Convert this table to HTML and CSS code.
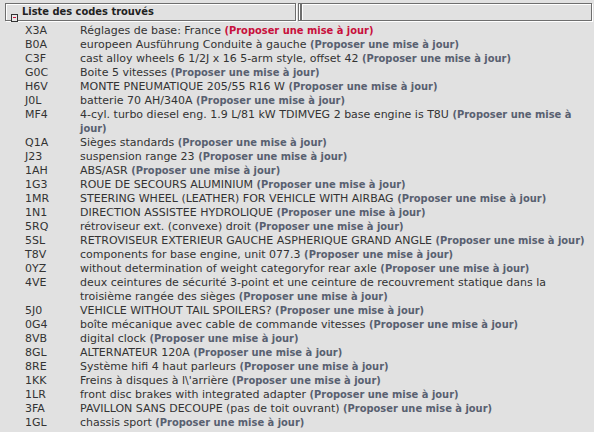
FILE: index.html
```html
<!DOCTYPE html>
<html lang="fr">

<head>
    <meta charset="UTF-8">
    <title>Liste des codes trouvés</title>
    <link rel="stylesheet" href="styles.css">
</head>

<body>
    <!-- En-tête du panneau -->
    <div class="panel-head">
        <div class="head-cell head-title">
            <span class="toggle"></span>
            <span class="title">Liste des codes trouvés</span>
        </div>
        <div class="head-cell head-sep"></div>
        <div class="head-cell head-rest"></div>
    </div>

    <!-- Liste des codes -->
    <table class="codes">
        <tr><td class="code">X3A</td><td>Réglages de base: France <a href="#" class="update red">(Proposer une mise à jour)</a></td></tr>
        <tr><td class="code">B0A</td><td>europeen Ausführung Conduite à gauche <a href="#" class="update">(Proposer une mise à jour)</a></td></tr>
        <tr><td class="code">C3F</td><td>cast alloy wheels 6 1/2J x 16 5-arm style, offset 42 <a href="#" class="update">(Proposer une mise à jour)</a></td></tr>
        <tr><td class="code">G0C</td><td>Boite 5 vitesses <a href="#" class="update">(Proposer une mise à jour)</a></td></tr>
        <tr><td class="code">H6V</td><td>MONTE PNEUMATIQUE 205/55 R16 W <a href="#" class="update">(Proposer une mise à jour)</a></td></tr>
        <tr><td class="code">J0L</td><td>batterie 70 AH/340A <a href="#" class="update">(Proposer une mise à jour)</a></td></tr>
        <tr><td class="code">MF4</td><td>4-cyl. turbo diesel eng. 1.9 L/81 kW TDIMVEG 2 base engine is T8U <a href="#" class="update">(Proposer une mise à jour)</a></td></tr>
        <tr><td class="code">Q1A</td><td>Sièges standards <a href="#" class="update">(Proposer une mise à jour)</a></td></tr>
        <tr><td class="code">J23</td><td>suspension range 23 <a href="#" class="update">(Proposer une mise à jour)</a></td></tr>
        <tr><td class="code">1AH</td><td>ABS/ASR <a href="#" class="update">(Proposer une mise à jour)</a></td></tr>
        <tr><td class="code">1G3</td><td>ROUE DE SECOURS ALUMINIUM <a href="#" class="update">(Proposer une mise à jour)</a></td></tr>
        <tr><td class="code">1MR</td><td>STEERING WHEEL (LEATHER) FOR VEHICLE WITH AIRBAG <a href="#" class="update">(Proposer une mise à jour)</a></td></tr>
        <tr><td class="code">1N1</td><td>DIRECTION ASSISTEE HYDROLIQUE <a href="#" class="update">(Proposer une mise à jour)</a></td></tr>
        <tr><td class="code">5RQ</td><td>rétroviseur ext. (convexe) droit <a href="#" class="update">(Proposer une mise à jour)</a></td></tr>
        <tr><td class="code">5SL</td><td>RETROVISEUR EXTERIEUR GAUCHE ASPHERIQUE GRAND ANGLE <a href="#" class="update">(Proposer une mise à jour)</a></td></tr>
        <tr><td class="code">T8V</td><td>components for base engine, unit 077.3 <a href="#" class="update">(Proposer une mise à jour)</a></td></tr>
        <tr><td class="code">0YZ</td><td>without determination of weight categoryfor rear axle <a href="#" class="update">(Proposer une mise à jour)</a></td></tr>
        <tr><td class="code">4VE</td><td>deux ceintures de sécurité 3-point et une ceinture de recouvrement statique dans la troisième rangée des sièges <a href="#" class="update">(Proposer une mise à jour)</a></td></tr>
        <tr><td class="code">5J0</td><td>VEHICLE WITHOUT TAIL SPOILERS? <a href="#" class="update">(Proposer une mise à jour)</a></td></tr>
        <tr><td class="code">0G4</td><td>boîte mécanique avec cable de commande vitesses <a href="#" class="update">(Proposer une mise à jour)</a></td></tr>
        <tr><td class="code">8VB</td><td>digital clock <a href="#" class="update">(Proposer une mise à jour)</a></td></tr>
        <tr><td class="code">8GL</td><td>ALTERNATEUR 120A <a href="#" class="update">(Proposer une mise à jour)</a></td></tr>
        <tr><td class="code">8RE</td><td>Système hifi 4 haut parleurs <a href="#" class="update">(Proposer une mise à jour)</a></td></tr>
        <tr><td class="code">1KK</td><td>Freins à disques à l\'arrière <a href="#" class="update">(Proposer une mise à jour)</a></td></tr>
        <tr><td class="code">1LR</td><td>front disc brakes with integrated adapter <a href="#" class="update">(Proposer une mise à jour)</a></td></tr>
        <tr><td class="code">3FA</td><td>PAVILLON SANS DECOUPE (pas de toit ouvrant) <a href="#" class="update">(Proposer une mise à jour)</a></td></tr>
        <tr><td class="code">1GL</td><td>chassis sport <a href="#" class="update">(Proposer une mise à jour)</a></td></tr>
    </table>
</body>

</html>
```

FILE: styles.css
```css
/* Styles généraux */
body {
    font-family: "DejaVu Sans", sans-serif;
    font-size: 11px;
    color: #333;
    background-color: #e1e1e1;
    margin: 0;
    padding: 0;
}

/* En-tête du panneau */
.panel-head {
    display: flex;
    margin: 3px 0 0 5px;
    height: 18px;
}

.head-cell {
    box-sizing: border-box;
    height: 18px;
    border: 1px solid #6e6e6e;
    box-shadow: inset 1px 1px 0 #fff, 1px 1px 0 #fff;
}

.head-title {
    width: 291px;
    display: flex;
    align-items: center;
}

.head-sep {
    width: 3px;
    margin-left: 2px;
}

.head-rest {
    width: 291px;
}

.toggle {
    box-sizing: border-box;
    width: 7px;
    height: 8px;
    margin: 0 4px -2px 5px;
    align-self: flex-end;
    border: 1px solid #333;
    background-color: #e8e8e8;
    position: relative;
}

.toggle::after {
    content: "";
    position: absolute;
    left: 1px;
    top: 2px;
    width: 3px;
    height: 1px;
    background-color: #d0103a;
}

.title {
    font-family: "DejaVu Sans Condensed", "DejaVu Sans", sans-serif;
    font-stretch: condensed;
    font-size: 11px;
    font-weight: bold;
    line-height: 16px;
    color: #222;
}

/* Liste des codes */
.codes {
    border-collapse: collapse;
    margin: 3px 0 0 25px;
    width: 563px;
}

.codes td {
    padding: 0;
    line-height: 14px;
    vertical-align: top;
}

.codes td.code {
    width: 55px;
}

.update {
    font-family: "DejaVu Sans Condensed", "DejaVu Sans", sans-serif;
    font-stretch: condensed;
    color: #586070;
    font-weight: bold;
    text-decoration: none;
}

.update.red {
    color: #c8103c;
}
```
